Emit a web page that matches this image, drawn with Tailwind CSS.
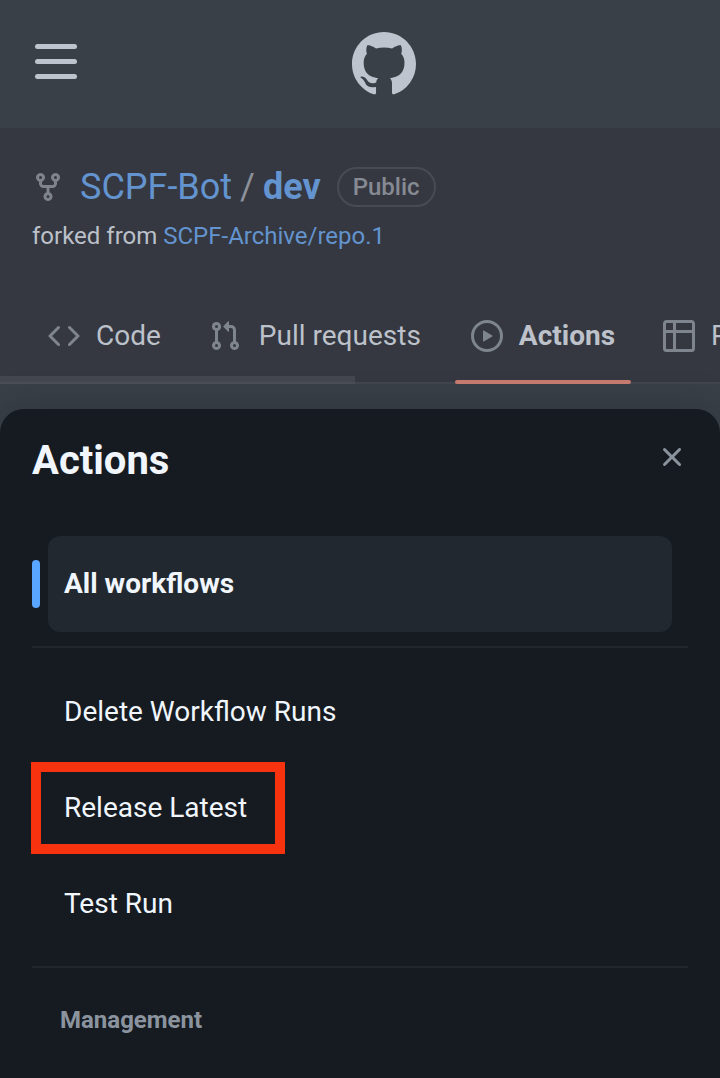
<!DOCTYPE html>
<html lang="en">
<head>
<meta charset="utf-8">
<title>Actions</title>
<script src="https://cdn.jsdelivr.net/npm/@tailwindcss/browser@4"></script>
</head>
<body class="w-[720px] h-[1078px] overflow-hidden bg-[#394047] font-['Roboto',sans-serif] flex flex-col">
<header class="h-32 shrink-0 grid grid-cols-3 items-start px-[35px] pt-8">
  <div class="flex flex-col gap-[10px] pt-3">
    <span class="h-[5px] w-[42px] rounded-full bg-[#bdc4cd]"></span>
    <span class="h-[5px] w-[42px] rounded-full bg-[#bdc4cd]"></span>
    <span class="h-[5px] w-[42px] rounded-full bg-[#bdc4cd]"></span>
  </div>
  <svg class="size-16 ml-[100px] fill-[#bdc4cd]" viewBox="0 0 16 16"><path d="M8 0C3.58 0 0 3.58 0 8c0 3.54 2.29 6.53 5.47 7.59.4.07.55-.17.55-.38 0-.19-.01-.82-.01-1.49-2.01.37-2.53-.49-2.69-.94-.09-.23-.48-.94-.82-1.13-.28-.15-.68-.52-.01-.53.63-.01 1.08.58 1.23.82.72 1.21 1.87.87 2.33.66.07-.52.28-.87.51-1.07-1.78-.2-3.64-.89-3.64-3.95 0-.87.31-1.59.82-2.15-.08-.2-.36-1.02.08-2.12 0 0 .67-.21 2.2.82.64-.18 1.32-.27 2-.27s1.36.09 2 .27c1.53-1.04 2.2-.82 2.2-.82.44 1.1.16 1.92.08 2.12.51.56.82 1.27.82 2.15 0 3.07-1.87 3.75-3.65 3.95.29.25.54.73.54 1.48 0 1.07-.01 1.93-.01 2.2 0 .21.15.46.55.38A8.01 8.01 0 0 0 16 8c0-4.42-3.58-8-8-8Z"/></svg>
</header>

<section class="h-64 shrink-0 bg-[#353841] flex flex-col">
  <div class="flex items-center h-12 mt-[35px] px-8">
    <svg class="size-8 fill-[#7e838c]" viewBox="0 0 16 16"><path d="M5 5.372v.878c0 .414.336.75.75.75h4.5a.75.75 0 0 0 .75-.75v-.878a2.25 2.25 0 1 1 1.5 0v.878a2.25 2.25 0 0 1-2.25 2.25h-1.5v2.128a2.251 2.251 0 1 1-1.5 0V8.5h-1.5A2.25 2.25 0 0 1 3.5 6.25v-.878a2.25 2.25 0 1 1 1.5 0ZM5 3.25a.75.75 0 1 0-1.5 0 .75.75 0 0 0 1.5 0Zm6.75.75a.75.75 0 1 0 0-1.5.75.75 0 0 0 0 1.5Zm-3 8.75a.75.75 0 1 0-1.5 0 .75.75 0 0 0 1.5 0Z"/></svg>
    <span class="ml-4 text-4xl text-[#6394cf]">SCPF-Bot</span>
    <span class="ml-2 text-4xl text-[#8c919a]">/</span>
    <span class="ml-2 text-4xl font-bold text-[#6394cf]">dev</span>
    <span class="ml-4 h-10 px-[14px] rounded-full border-2 border-[#484b54] text-2xl leading-9 font-medium text-[#858a93]">Public</span>
  </div>
  <p class="mt-[7px] px-8 text-2xl leading-9 text-[#bcc1ca]">forked from <span class="text-[#6394cf]">SCPF-Archive/repo.1</span></p>
  <nav class="relative mt-auto h-24 pl-8 flex gap-4 overflow-hidden text-[28px] text-[#bcc1ca] whitespace-nowrap">
    <div class="absolute inset-x-0 bottom-0 h-[2px] bg-[#40444c]"></div>
    <div class="absolute left-0 bottom-0 w-[355px] h-2 bg-[#43464e] border-b-2 border-[#4a4d55]"></div>
    <div class="flex shrink-0 items-center gap-4 px-4">
      <svg class="size-8 fill-[#7e858e]" viewBox="0 0 16 16"><path d="m11.28 3.22 4.25 4.25a.75.75 0 0 1 0 1.06l-4.25 4.25a.749.749 0 0 1-1.275-.326.749.749 0 0 1 .215-.734L13.94 8l-3.72-3.72a.749.749 0 0 1 .326-1.275.749.749 0 0 1 .734.215Zm-6.56 0a.751.751 0 0 1 1.042.018.751.751 0 0 1 .018 1.042L2.06 8l3.72 3.72a.749.749 0 0 1-.326 1.275.749.749 0 0 1-.734-.215L.47 8.53a.75.75 0 0 1 0-1.06Z"/></svg>
      <span>Code</span>
    </div>
    <div class="flex shrink-0 items-center gap-[18px] pl-4 pr-[18px]">
      <svg class="size-8 fill-[#7e858e]" viewBox="0 0 16 16"><path d="M1.5 3.25a2.25 2.25 0 1 1 3 2.122v5.256a2.251 2.251 0 1 1-1.5 0V5.372A2.25 2.25 0 0 1 1.5 3.25Zm5.677-.177L9.573.677A.25.25 0 0 1 10 .854V2.5h1A2.5 2.5 0 0 1 13.5 5v5.628a2.251 2.251 0 1 1-1.5 0V5a1 1 0 0 0-1-1h-1v1.646a.25.25 0 0 1-.427.177L7.177 3.427a.25.25 0 0 1 0-.354ZM3.75 2.5a.75.75 0 1 0 0 1.5.75.75 0 0 0 0-1.5Zm0 9.5a.75.75 0 1 0 0 1.5.75.75 0 0 0 0-1.5Zm8.25.75a.75.75 0 1 0 1.5 0 .75.75 0 0 0-1.5 0Z"/></svg>
      <span>Pull requests</span>
    </div>
    <div class="relative flex shrink-0 items-center gap-4 px-4">
      <svg class="size-8 fill-[#7e858e]" viewBox="0 0 16 16"><path d="M8 0a8 8 0 1 1 0 16A8 8 0 0 1 8 0ZM1.5 8a6.5 6.5 0 1 0 13 0 6.5 6.5 0 0 0-13 0Zm4.879-2.773 4.264 2.559a.25.25 0 0 1 0 .428l-4.264 2.559A.25.25 0 0 1 6 10.559V5.442a.25.25 0 0 1 .379-.215Z"/></svg>
      <span class="font-bold">Actions</span>
      <div class="absolute inset-x-0 bottom-0 h-1 rounded-full bg-[#c47a6e]"></div>
    </div>
    <div class="flex shrink-0 items-center gap-4 px-4">
      <svg class="size-8 fill-[#7e858e]" viewBox="0 0 16 16"><path d="M0 1.75C0 .784.784 0 1.75 0h12.5C15.216 0 16 .784 16 1.75v12.5A1.75 1.75 0 0 1 14.25 16H1.75A1.75 1.75 0 0 1 0 14.25ZM6.5 6.5v8h7.75a.25.25 0 0 0 .25-.25V6.5Zm8-1.5V1.75a.25.25 0 0 0-.25-.25H6.5V5Zm-13 1.5v7.75c0 .138.112.25.25.25H5v-8ZM5 5V1.500H1.750a.25.25 0 0 0-.25.25V5Z"/></svg>
      <span>Projects</span>
    </div>
  </nav>
</section>

<main class="mt-[25px] grow rounded-t-3xl bg-[#161b22] text-[#f0f6fc] text-[28px] shadow-[0_0_36px_rgba(22,27,34,0.3)] px-8">
  <div class="flex items-center justify-between h-[102px]">
    <h1 class="text-[40px] font-bold pt-[2px]">Actions</h1>
    <svg class="size-8 fill-[#8b949e] -mt-[7px]" viewBox="0 0 16 16"><path d="M3.72 3.72a.75.75 0 0 1 1.06 0L8 6.94l3.22-3.22a.749.749 0 0 1 1.275.326.749.749 0 0 1-.215.734L9.060 8l3.220 3.220a.749.749 0 0 1-.326 1.275.749.749 0 0 1-.734-.215L8 9.060l-3.220 3.220a.751.751 0 0 1-1.042-.018.751.751 0 0 1-.018-1.042L6.940 8 3.720 4.780a.75.750 0 0 1 0-1.060Z"/></svg>
  </div>
  <div class="mt-[25px] flex items-center gap-2 pr-4">
    <span class="w-2 h-12 rounded-full bg-[#58a6ff]"></span>
    <div class="grow h-24 rounded-xl bg-[#21282f] px-4 font-bold leading-[96px]">All workflows</div>
  </div>
  <div class="mt-[14px] h-[2px] bg-[#21262d]"></div>
  <ul class="mt-4 px-8 leading-[96px]">
    <li class="h-24">Delete Workflow Runs</li>
    <li class="relative h-24">Release Latest
      <div class="absolute -left-[33px] top-[2px] w-[254px] h-[92px] border-[10px] border-[#f7330f]"></div>
    </li>
    <li class="h-24">Test Run</li>
  </ul>
  <div class="mt-[14px] h-[2px] bg-[#21262d]"></div>
  <h2 class="mt-8 pl-7 text-2xl leading-10 font-bold text-[#8b949e]">Management</h2>
</main>
</body>
</html>
